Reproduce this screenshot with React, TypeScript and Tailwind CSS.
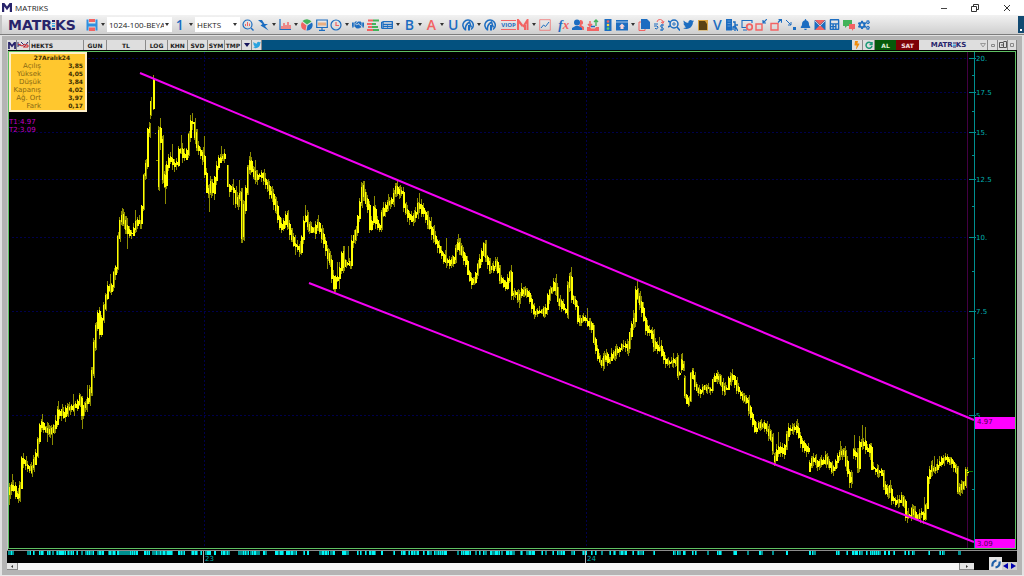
import type { ReactNode } from "react"
import {
  FaBell,
  FaBolt,
  FaCalculator,
  FaCogs,
  FaHandshake,
  FaNewspaper,
  FaTwitter,
} from "react-icons/fa"

type Point = [number, number]
type Span = [number, number]

// Price path as x,y pairs; a new run starts wherever the series has a gap.
const priceRuns: number[][] = [
  [9, 493, 12, 485, 15, 488, 18, 499, 21, 487, 22, 465, 23, 458, 27, 464, 31, 470, 34, 466, 36, 457, 38, 448, 40, 430,
    42, 421, 45, 428, 50, 433, 53, 429, 57, 423, 58, 411, 62, 412, 65, 416, 68, 407, 72, 408, 78, 405, 81, 398, 82, 420,
    84, 408, 87, 403, 90, 398, 92, 384, 94, 357, 96, 333, 99, 312, 101, 333, 103, 317, 106, 302, 108, 290, 110, 285,
    112, 293, 114, 277, 117, 267, 118, 250, 119, 238, 121, 220, 122, 213, 126, 224, 130, 233, 133, 233, 137, 222,
    142, 221, 143, 205, 144, 180, 147, 165, 148, 150, 149, 130],
  [150, 114, 151, 104],
  [153, 79, 154, 105],
  [158, 186, 160, 130, 162, 140, 163, 173, 166, 183, 168, 165, 171, 157, 175, 164, 178, 163, 181, 144, 183, 155,
    187, 157, 189, 145, 191, 127, 193, 119, 195, 126, 197, 143, 200, 150, 204, 157, 206, 173, 209, 200, 211, 180,
    214, 190, 217, 173, 219, 160, 225, 155],
  [227, 167, 228, 183, 232, 190, 234, 187, 237, 203, 241, 193, 243, 235, 244, 233, 245, 207, 248, 180, 250, 157,
    253, 170, 257, 177, 262, 173, 267, 183, 272, 193, 277, 207, 282, 230, 287, 215, 290, 230, 295, 243, 302, 250,
    304, 227, 306, 213, 310, 228, 315, 230, 319, 223, 322, 233, 327, 250, 332, 263, 334, 290, 337, 277, 340, 277,
    343, 253, 345, 265, 348, 260, 351, 265, 353, 240, 357, 232, 360, 210, 362, 193, 363, 188, 367, 200, 369, 207,
    371, 227, 373, 220, 374, 203, 377, 220, 380, 230, 383, 215, 388, 203, 392, 202, 397, 187, 400, 192, 403, 193,
    405, 205, 408, 213, 412, 220, 417, 212, 420, 202, 423, 210, 428, 218, 432, 230, 436, 238, 440, 248, 445, 258,
    452, 263, 456, 257, 458, 240, 462, 250, 467, 262, 470, 277, 474, 283, 477, 273, 481, 260, 485, 245, 488, 262,
    492, 270, 497, 263, 501, 277, 507, 287, 511, 273, 513, 293, 517, 293, 519, 298, 523, 290, 528, 292, 532, 301,
    534, 312, 539, 312, 543, 310, 546, 313, 550, 292, 553, 290, 556, 280, 558, 298, 563, 305, 567, 312, 569, 287,
    571, 277, 573, 297, 577, 305, 579, 320, 585, 318, 590, 324, 593, 327, 595, 340, 598, 355, 603, 363, 607, 355,
    610, 362, 614, 353, 620, 348, 625, 345, 629, 347, 631, 333, 633, 323, 635, 320, 636, 302, 637, 290, 641, 302,
    644, 313, 647, 327, 652, 332, 656, 347, 662, 348, 664, 358, 670, 362, 677, 360, 679, 373],
  [681, 360, 683, 367],
  [684, 380, 685, 387, 687, 403, 690, 400, 692, 373, 693, 373, 696, 385, 700, 392, 705, 388, 712, 388, 714, 380,
    719, 375, 723, 387, 727, 390, 730, 380, 734, 377, 738, 387, 743, 397, 748, 400, 751, 412, 756, 430, 760, 424,
    765, 425, 769, 431, 772, 438, 773, 448],
  [774, 460, 777, 457, 779, 445, 784, 452, 787, 440, 790, 428, 797, 427, 801, 438, 805, 447, 808, 450],
  [809, 470, 812, 461, 815, 458, 820, 465, 827, 458, 834, 470, 840, 453, 845, 452, 848, 468, 851, 479],
  [853, 452, 857, 455, 859, 466, 861, 443, 865, 442, 868, 450, 871, 447, 873, 467, 878, 470, 883, 473, 886, 493,
    891, 488, 893, 498, 897, 502, 904, 497, 907, 515, 910, 516, 913, 510, 917, 517, 922, 512, 925, 516, 928, 503,
    929, 477, 932, 468, 937, 468, 942, 460, 947, 457, 953, 462, 957, 470, 959, 490, 964, 485, 966, 480, 967, 472],
]

// Long wicks: x, high, low.
const longWicks: [number, number, number][] = [
  [9, 487, 505], [12, 474, 490], [18, 488, 503], [23, 453, 466], [42, 414, 430], [47, 422, 442], [52, 428, 445],
  [58, 401, 416], [73, 394, 412], [82, 396, 429], [87, 385, 412], [99, 307, 330], [110, 274, 292], [122, 208, 222],
  [127, 218, 249], [135, 210, 233], [151, 103, 116], [160, 118, 150], [165, 165, 204], [172, 144, 170], [181, 135, 152],
  [192, 113, 130], [195, 118, 144], [204, 136, 162], [209, 190, 212], [214, 178, 200], [221, 146, 160], [233, 179, 205],
  [239, 180, 207], [250, 152, 175], [255, 160, 184], [272, 186, 200], [295, 235, 255], [305, 205, 222], [318, 215, 229],
  [327, 245, 269], [337, 262, 280], [339, 262, 289], [343, 246, 268], [348, 246, 262], [334, 278, 294], [362, 183, 200],
  [374, 196, 218], [388, 194, 206], [397, 181, 196], [403, 187, 208], [419, 193, 208], [431, 217, 238], [446, 238, 260],
  [458, 234, 248], [485, 240, 252], [497, 257, 268], [511, 265, 282], [519, 290, 308], [534, 303, 319], [556, 274, 286],
  [571, 267, 292], [587, 308, 324], [606, 349, 362], [637, 281, 298], [633, 310, 330], [652, 327, 343], [659, 337, 352],
  [673, 353, 362], [682, 353, 368], [693, 368, 380], [717, 370, 384], [732, 369, 382], [778, 432, 450], [797, 419, 430],
  [816, 454, 468], [840, 441, 460], [851, 470, 488], [854, 435, 455], [862, 425, 446], [865, 427, 449], [870, 443, 460],
  [913, 505, 516], [924, 497, 514], [908, 508, 519], [934, 456, 470], [947, 454, 464],
]

const noise = (n: number) => {
  const v = Math.sin(n * 127.1) * 43758.5453
  return v - Math.floor(v)
}

function valueAt(run: number[], x: number) {
  for (let i = 0; i + 3 < run.length; i += 2) {
    if (x <= run[i + 2]) {
      const t = (x - run[i]) / (run[i + 2] - run[i])
      return run[i + 1] + (run[i + 3] - run[i + 1]) * t
    }
  }
  return run[run.length - 1]
}

function buildBars() {
  let bodies = ""
  let wicks = ""
  for (const run of priceRuns) {
    const last = run[run.length - 2]
    for (let x = run[0]; x <= last; x += 2) {
      const a = valueAt(run, x)
      const b = valueAt(run, Math.min(x + 2, last))
      const top = Math.round(Math.min(a, b) - noise(x) * 3)
      const bottom = Math.round(Math.max(a, b) + 1 + noise(x + 7) * 3)
      const up = Math.round(noise(x + 11) * 5)
      const down = Math.round(noise(x + 19) * 5)
      bodies += `M${x + 0.5} ${top}V${bottom}`
      // Solid candles fill both columns, hollow ones leave a dim second column.
      if (noise(x + 3) > 0.45) bodies += `M${x + 1.5} ${top + 1}V${bottom}`
      else wicks += `M${x + 1.5} ${top - down}V${bottom + up}`
      wicks += `M${x + 0.5} ${top - up}V${bottom + down}`
    }
  }
  for (const [x, high, low] of longWicks) wicks += `M${x + 0.5} ${high}V${low}`
  return { bodies, wicks }
}

const bars = buildBars()

const scaleY = (price: number) => Math.round(415 - 257.5 * Math.log(price / 5))
const majorPrices = [20, 17.5, 15, 12.5, 10, 7.5, 5]
const minorPrices = [18.75, 16.25, 13.75, 11.25, 8.75, 6.25, 3.75]
const priceLabel = (p: number) => (p === 5 ? "5" : Number.isInteger(p) ? `${p}.` : `${p}`)

const trendLines: [Point, Point][] = [
  [[140, 73], [974, 420]],
  [[309, 283], [974, 542]],
]

const newsSpans: Span[] = [
  [8, 10], [11, 13], [27, 28], [29, 30], [33, 34], [39, 41], [42, 43], [47, 48], [49, 50], [52, 53], [56, 65], [67, 73],
  [76, 77], [81, 82], [85, 87], [88, 93], [97, 103], [108, 115], [117, 137], [144, 149], [152, 172], [178, 184],
  [191, 197], [200, 201], [205, 210], [214, 215], [221, 229], [238, 248], [250, 259], [263, 266], [275, 283], [286, 296],
  [303, 304], [307, 308], [319, 328], [330, 334], [342, 348], [357, 358], [360, 361], [365, 366], [369, 375], [381, 382],
  [393, 394], [401, 405], [408, 409], [411, 418], [423, 424], [427, 431], [434, 446], [457, 458], [461, 470], [475, 476],
  [479, 480], [483, 486], [490, 499], [501, 502], [506, 514], [520, 522], [526, 534], [541, 542], [545, 546], [552, 553],
  [557, 564], [571, 574], [582, 586], [591, 592], [595, 596], [601, 602], [609, 610], [613, 615], [619, 626], [632, 633],
  [637, 643], [653, 654], [673, 675], [677, 680], [683, 685], [692, 693], [695, 696], [707, 708], [717, 721], [733, 736],
  [747, 748], [759, 762], [772, 773], [786, 787], [809, 810], [812, 815], [836, 839], [846, 847], [852, 857], [859, 862],
  [866, 867], [870, 880], [884, 885], [888, 889], [893, 894], [904, 905], [908, 909], [912, 914], [928, 929], [939, 940],
  [942, 944], [958, 960],
]

const quoteRows = [
  ["Açılış", "3,85"],
  ["Yüksek", "4,05"],
  ["Düşük", "3,84"],
  ["Kapanış", "4,02"],
  ["Ağ. Ort", "3,97"],
  ["Fark", "0,17"],
]

const BLUE = "#1c6dc1"
const RED = "#f26363"

function Glyph({ children }: { children: ReactNode }) {
  return (
    <svg viewBox="0 0 12 12" className="size-3" fill="none" stroke={BLUE} strokeWidth="1.4">
      {children}
    </svg>
  )
}

function Tool({ label, children }: { label: string; children: ReactNode }) {
  return (
    <button type="button" aria-label={label} className="flex min-w-0 grow-2 basis-0 items-center justify-center text-[#1c6dc1]">
      {children}
    </button>
  )
}

function Caret({ label }: { label: string }) {
  return (
    <button type="button" aria-label={label} className="flex min-w-0 grow basis-0 items-center justify-center">
      <svg viewBox="0 0 4 3" className="h-[3px] w-1 shrink-0 fill-[#333]">
        <path d="M0 0h4L2 3z" />
      </svg>
    </button>
  )
}

function Letter({ children, red }: { children: ReactNode; red?: boolean }) {
  return (
    <span className={`text-[14px] leading-3 font-semibold ${red ? "text-[#f26363]" : "text-[#1c6dc1]"}`}>{children}</span>
  )
}

function Brand({ small }: { small?: boolean }) {
  return (
    <span
      className={`flex items-center font-["DejaVu_Sans",sans-serif] font-bold text-[#28246b] ${small ? "text-[7px] leading-[8px]" : "text-[14px] leading-4"}`}
    >
      MATR
      <svg viewBox="0 0 4 12" className={small ? "h-[6px] w-[3px]" : "h-3 w-[3px]"} preserveAspectRatio="none">
        <path d="M0 1h4v2H0z" fill="#28246b" />
        <path d="M0 4h4v1H0zM0 6h4v2H0z" fill="#3fa9e0" />
        <path d="M0 9h4v2H0z" fill="#28246b" />
      </svg>
      KS
    </span>
  )
}

function BrandMark({ small }: { small?: boolean }) {
  return (
    <svg viewBox="0 0 10 9" className={small ? "h-[7px] w-2" : "h-[9px] w-[10px]"} fill="#28246b">
      <path d="M0 0h2.4L5 3.6 7.6 0H10v9H7.8V3.6L5 7.2 2.2 3.6V9H0z" />
    </svg>
  )
}

function Combo({ label, value, width }: { label: string; value: string; width: string }) {
  return (
    <div className={`relative h-[15px] bg-white ${width}`}>
      <select
        aria-label={label}
        className="block h-full w-full appearance-none overflow-hidden bg-transparent pr-2 pl-[2px] text-[8px] text-[#222]"
      >
        <option>{value}</option>
      </select>
      <svg viewBox="0 0 4 3" className="pointer-events-none absolute top-[6px] right-[3px] h-[3px] w-1 fill-[#333]">
        <path d="M0 0h4L2 3z" />
      </svg>
    </div>
  )
}

function TitleBar() {
  return (
    <header className="flex h-[15px] items-center bg-white pl-[2px]">
      <BrandMark />
      <h1 className="ml-[3px] text-[8px] leading-[15px] text-[#222]">MATRIKS</h1>
      <div className="ml-auto flex items-center">
        <button type="button" aria-label="Simge durumuna küçült" className="flex w-8 justify-center">
          <svg viewBox="0 0 8 8" className="size-2" stroke="#444" fill="none"><path d="M1 4.500h6" /></svg>
        </button>
        <button type="button" aria-label="Önceki boyut" className="flex w-[30px] justify-center">
          <svg viewBox="0 0 8 8" className="size-2" stroke="#333" fill="none"><path d="M.5 2.500h5v5h-5zM2.500 2.500v-2h5v5h-2" /></svg>
        </button>
        <button type="button" aria-label="Kapat" className="flex w-[34px] justify-center">
          <svg viewBox="0 0 8 8" className="size-2" stroke="#333" fill="none"><path d="M1 1l6 6M7 1L1 7" /></svg>
        </button>
      </div>
    </header>
  )
}

function Compass() {
  return (
    <Glyph>
      <path d="M3.500 10.700A5.200 5.200 0 1 1 9 10.500" strokeWidth="1.500" />
      <path d="M3.500 11.500C3 8 4 5 7.500 3c1 2 .5 3 2 5.500" strokeWidth="1.500" />
      <path d="M7 6v5.500" strokeWidth="2" />
    </Glyph>
  )
}

function Toolbar() {
  return (
    <div className="flex h-[19px] items-stretch bg-linear-to-b from-[#f2f2f2] to-[#cfcfcf]">
      <div className="flex w-[84px] items-center border-l-2 border-[#c4c4c4] pl-[6px]">
        <Brand />
      </div>
      <div className="flex w-[23px] items-stretch">
        <Tool label="Kaydet">
          <Glyph>
            <path d="M.5.5h2v4h7v-4h2v11h-2v-4h-7v4h-2z" fill="#2f8fe0" stroke="none" />
            <path d="M3 0h6v3H3zM3 8.500h6V12H3z" fill={RED} stroke="none" />
          </Glyph>
        </Tool>
        <Caret label="Kaydet seçenekleri" />
      </div>
      <div className="flex items-center">
        <Combo label="Sayfa" value="1024-100-BEYA" width="w-[65px]" />
      </div>
      <div className="flex w-[23px] items-stretch">
        <Tool label="Periyot">
          <Letter>1</Letter>
        </Tool>
        <Caret label="Periyot seçenekleri" />
      </div>
      <div className="flex items-center">
        <Combo label="Sembol" value="HEKTS" width="w-[45px]" />
      </div>
      <div className="flex min-w-0 flex-1 items-stretch pr-[147px] pl-px">
        <Tool label="Yakınlaştır">
          <Glyph>
            <circle cx="5.500" cy="5.500" r="4.500" strokeWidth="1.200" />
            <path d="M9 9l2.500 2.500" />
            <path d="M3.500 7V5M5.500 7V3M7.500 7V4.500" stroke={RED} strokeWidth="1" />
          </Glyph>
        </Tool>
        <Tool label="Çizim">
          <Glyph><path d="M1 1h4l2.500 4H11L8 7l3.500 4.500L3.500 6.500 5.500 5z" fill={BLUE} stroke="none" /></Glyph>
        </Tool>
        <Caret label="Çizim seçenekleri" />
        <Tool label="Grafik">
          <Glyph>
            <path d="M1 0v10.500h11" strokeWidth="1.200" />
            <path d="M3 10V7M5 10V4M7 10V6M9 10V3M11 10V6" stroke={RED} />
          </Glyph>
        </Tool>
        <Caret label="Grafik seçenekleri" />
        <Tool label="Dağılım">
          <Glyph>
            <path d="M5.500 6.500L1 3a5.500 5.500 0 0 0 3.500 8.500z" fill={RED} stroke="none" />
            <path d="M6 5.500L1.500 2a6 6 0 0 1 9 .5z" fill="#43b35a" stroke="none" />
            <path d="M6.500 6.500L11 3.500a5.500 5.500 0 0 1-5.500 8z" fill={BLUE} stroke="none" />
          </Glyph>
        </Tool>
        <Tool label="Ekran">
          <Glyph>
            <path d="M.7 1h10.600v7.500H.7zM6 8.500v2.500M3 11.300h6" strokeWidth="1.200" />
            <path d="M3 6.500v-3M5 6.500v-3M7 6.500v-3M9 6.500v-3" stroke="#ec9a5a" />
          </Glyph>
        </Tool>
        <Tool label="Zaman">
          <Glyph><circle cx="6" cy="6" r="5" strokeWidth="1.200" /><path d="M6 3v3.500h3" stroke={RED} strokeWidth="1.200" /></Glyph>
        </Tool>
        <Caret label="Zaman seçenekleri" />
        <Tool label="Takas"><FaHandshake className="size-3" /></Tool>
        <Tool label="Derinlik">
          <Glyph>
            <path d="M1 1.500h5M0 5h5M1 8h4M0 11h6" stroke={RED} strokeWidth="2" />
            <path d="M6 1.500h6M5 5h4M5 8h6M6 11h6" stroke="#43b35a" strokeWidth="2" />
          </Glyph>
        </Tool>
        <Tool label="Haberler"><FaNewspaper className="size-3" /></Tool>
        <Caret label="Haber seçenekleri" />
        <Tool label="Bilanço"><Letter>B</Letter></Tool>
        <Caret label="Bilanço seçenekleri" />
        <Tool label="Analiz"><Letter red>A</Letter></Tool>
        <Caret label="Analiz seçenekleri" />
        <Tool label="Uzman"><Letter>U</Letter></Tool>
        <Tool label="Gösterge"><Compass /></Tool>
        <Caret label="Gösterge seçenekleri" />
        <Tool label="Tarayıcı"><Compass /></Tool>
        <span className="w-1" />
        <Tool label="VIOP">
          <span className="border-y border-[#f26363] text-[6px] leading-[8px] font-bold">VIOP</span>
        </Tool>
        <Tool label="Matriks">
          <Glyph>
            <path d="M1 11V1l4.500 6" stroke={RED} strokeWidth="2.200" />
            <path d="M6 8l4.500-7v10M8 6v5" stroke={RED} strokeWidth="2" />
          </Glyph>
        </Tool>
        <Caret label="Matriks seçenekleri" />
        <Tool label="Trend">
          <Glyph>
            <path d="M.7.7h10.600v10.600H.7z" stroke={RED} strokeWidth=".7" />
            <path d="M2 9l2.500-3 2 1.500L10 3" strokeWidth="1" />
          </Glyph>
        </Tool>
        <span className="w-1" />
        <Tool label="Fonksiyon">
          <span className="font-['Liberation_Serif',serif] text-[13px] leading-3 font-bold italic">
            f<span className="text-[#f26363]">x</span>
          </span>
        </Tool>
        <Tool label="Kullanıcılar">
          <Glyph>
            <path d="M8 1a2.500 2.500 0 0 1 1 5l3 2v3H7z" fill={RED} stroke="none" />
            <circle cx="5" cy="3.500" r="3" fill={BLUE} stroke="none" />
            <path d="M0 11V9l3.500-2h3L10 9v2z" fill={BLUE} stroke="none" />
          </Glyph>
        </Tool>
        <Tool label="Aktar">
          <Glyph>
            <path d="M3 2v5M1 5l2 2.500L5 5" stroke={RED} />
            <path d="M9 7V1M7 3l2-2 2 2" stroke="#43b35a" />
            <path d="M0 8h3l1 1.500h4L9 8h3v4H0z" fill={RED} stroke="none" />
            <path d="M4 7.500h4" stroke={BLUE} strokeWidth="1.500" />
          </Glyph>
        </Tool>
        <Tool label="Sinyal">
          <Glyph>
            <path d="M2.500 0h7v12h-7z" fill={BLUE} stroke="none" />
            <circle cx="6" cy="2.500" r="1.300" fill={RED} stroke="none" />
            <circle cx="6" cy="6" r="1.300" fill="#ffd83a" stroke="none" />
            <circle cx="6" cy="9.500" r="1.300" fill="#58d46b" stroke="none" />
          </Glyph>
        </Tool>
        <Tool label="Yükle">
          <Glyph>
            <path d="M0 1h12v10.500H0z" fill={BLUE} stroke="none" />
            <path d="M0 3h12" stroke="#cfe0f2" strokeWidth=".8" />
            <path d="M6 4.500l3 3H7.500V10h-3V7.500H3z" fill="#fbd5d5" stroke="none" />
          </Glyph>
        </Tool>
        <Caret label="Yükleme seçenekleri" />
        <Tool label="Kopyala">
          <Glyph>
            <path d="M1 3h6v8.500H1z" stroke={RED} strokeWidth="1" />
            <path d="M3 0h6l3 3v7H3z" fill={BLUE} stroke="none" />
          </Glyph>
        </Tool>
        <Tool label="Döviz">
          <Glyph>
            <path d="M4 3a3 3 0 0 1 6 1M8 3l2 1.500L11 2" stroke={RED} strokeWidth="1" />
            <path d="M1 5h4M1 7h3a1.500 1.500 0 1 1-2 2M11 6H9c-2 0-2 2 0 2.500s2 2.500 0 2.500H7M9 5v7" strokeWidth="1" />
          </Glyph>
        </Tool>
        <Tool label="Ara">
          <Glyph>
            <circle cx="6" cy="5" r="4" strokeWidth="1.500" />
            <path d="M9 8l3 3.500M2 3l-2-1M2 7l-2 1" strokeWidth="1.600" />
            <circle cx="6" cy="5" r="1.200" strokeWidth="1" />
          </Glyph>
        </Tool>
        <Tool label="Twitter"><FaTwitter className="size-[11px]" /></Tool>
        <Tool label="Notlar">
          <Glyph>
            <path d="M1 1h10v10.500H1z" fill="#d9a441" stroke="none" />
            <path d="M2 2h6l2 3v6H2z" fill="#5a4214" stroke="none" />
          </Glyph>
        </Tool>
        <Tool label="Veri"><Letter>V</Letter></Tool>
        <Tool label="Şirket">
          <Glyph>
            <path d="M0 0h6v11.500H0z" fill={BLUE} stroke="none" />
            <path d="M7 3h2v3h3M7 11V8l2-1 3 5M9 8v4" />
            <path d="M1.500 2h3M1.500 4.500h3M1.500 7h3" stroke="#6ea4dc" strokeWidth=".8" />
          </Glyph>
        </Tool>
        <Tool label="Ekranı kapat">
          <Glyph>
            <path d="M6 8.500H1v-7h10V4M2 11h4" strokeWidth="1.100" />
            <circle cx="8.500" cy="8" r="2.800" stroke={RED} strokeWidth="1.800" />
          </Glyph>
        </Tool>
        <Tool label="Küçült">
          <Glyph>
            <path d="M1 5h6v6H1z" stroke={RED} />
            <path d="M12 0L8.500 3.500M8 1v3h3" strokeWidth="1.200" />
          </Glyph>
        </Tool>
        <Tool label="Büyüt">
          <Glyph>
            <path d="M1 4.500h7V11H1z" stroke={RED} />
            <path d="M8 3.500L11.500 0M8.500.7h3v3" strokeWidth="1.200" />
          </Glyph>
        </Tool>
        <Tool label="Taşı">
          <Glyph>
            <path d="M1 1l5 5M6 3v3H3" strokeWidth="1" />
            <path d="M8 8h3v3H8z" fill={BLUE} stroke="none" />
          </Glyph>
        </Tool>
        <Tool label="Alarm"><FaBell className="size-[11px]" /></Tool>
        <Tool label="Mesaj">
          <Glyph>
            <path d="M.5 1h11v10H.5z" fill={BLUE} stroke="none" />
            <path d="M1 1h10L6 6z" fill={RED} stroke="none" />
            <path d="M1 11l4-4h2l4 4z" fill={RED} stroke="none" />
            <path d="M.5 1.500L6 7l5.500-5.500" stroke="#f3dede" strokeWidth=".8" />
          </Glyph>
        </Tool>
        <Tool label="Hesap makinesi"><FaCalculator className="size-[11px]" /></Tool>
        <Tool label="Sohbet">
          <Glyph>
            <path d="M0 1h9v6H4L2 9V7H0z" fill="#43b35a" stroke="none" />
            <path d="M6 5h6v5h-1.500L9 12V10H6z" fill={RED} stroke="none" />
          </Glyph>
        </Tool>
        <Tool label="Ayarlar"><FaCogs className="size-3" /></Tool>
      </div>
      <div className="my-px flex w-[6px] items-end justify-center bg-[#124a72] pb-[2px] text-white">
        <span className="size-[2px] bg-white" />
      </div>
    </div>
  )
}

function Cell({ children, width, label }: { children: ReactNode; width: string; label?: string }) {
  return (
    <button
      type="button"
      aria-label={label}
      className={`flex h-full shrink-0 items-center justify-center border-r border-[#8a8a8a] bg-[#dedede] text-[#222] ${width}`}
    >
      {children}
    </button>
  )
}

function ChartHeader() {
  return (
    <div className="flex h-[10px] items-stretch bg-[#03517f] font-['DejaVu_Sans',sans-serif] text-[6px] leading-[9px] font-bold">
      <Cell width="w-[10px]" label="Matriks"><BrandMark small /></Cell>
      <Cell width="w-[13px]" label="Para birimi">
        <svg viewBox="0 0 12 8" className="h-2 w-3" fill="none">
          <path d="M1 1v5M1 4h3M7 6l4-5M4 1l3 3" stroke="#28246b" strokeWidth="1" />
          <path d="M1 3l4 2 3-2M6 6h5V4H8" stroke="#d22" />
        </svg>
      </Cell>
      <button type="button" className="w-[54px] border-r border-[#8a8a8a] bg-[#dedede] pl-px text-left text-[#222]">HEKTS</button>
      <Cell width="w-[23px]">GUN</Cell>
      <Cell width="w-[39px]">TL</Cell>
      <Cell width="w-[22px]">LOG</Cell>
      <Cell width="w-5">KHN</Cell>
      <Cell width="w-5">SVD</Cell>
      <Cell width="w-[17px]">SYM</Cell>
      <Cell width="w-[17px]">TMP</Cell>
      <Cell width="w-[10px]" label="Menü">
        <svg viewBox="0 0 6 4" className="h-1 w-[6px]" fill="#15155c"><path d="M0 0h6L3 4z" /></svg>
      </Cell>
      <Cell width="w-[10px]" label="Paylaş"><FaTwitter className="size-2 text-[#2aa3e0]" /></Cell>
      <div className="ml-auto flex items-stretch">
        <Cell width="w-[11px]" label="Hızlı emir">
          <FaBolt className="size-2 text-[#f08c0a]" />
        </Cell>
        <Cell width="w-3" label="Yenile">
          <svg viewBox="0 0 8 8" className="size-2" fill="none" stroke="#1c9a78" strokeWidth="1.500">
            <path d="M6.500 2.500A3 3 0 1 0 7 5M7 1v2.500H4.500" />
          </svg>
        </Cell>
        <button type="button" className="w-[21px] bg-[#065a0b] text-[6px] text-[#e2f3dc]">AL</button>
        <button type="button" className="w-[23px] bg-[#7d0206] text-[6px] text-[#fbe3e3]">SAT</button>
        <div className="flex w-[59px] items-center justify-center bg-[#dedede]"><Brand small /></div>
        <Cell width="w-[10px]" label="Aşağı">
          <svg viewBox="0 0 6 6" className="size-[6px]" fill="none" stroke="#999"><path d="M.5 1.500h5L3 5z" /></svg>
        </Cell>
        <Cell width="w-[10px]" label="Simge">
          <svg viewBox="0 0 6 6" className="size-[6px]" fill="none" stroke="#888"><path d="M1.500 2.500h3v2h-3z" /></svg>
        </Cell>
        <Cell width="w-[10px]" label="Pencere">
          <svg viewBox="0 0 8 8" className="size-2" fill="none" stroke="#555"><path d="M.5 1.500h4v5h-4zM4.500.5h3v6h-3M2 4h3" /></svg>
        </Cell>
        <Cell width="w-[9px]" label="Kapat">
          <svg viewBox="0 0 6 6" className="size-[6px]" fill="none" stroke="#888"><path d="M1.500 1.500h3v3h-3z" /></svg>
        </Cell>
      </div>
    </div>
  )
}

function PriceChart() {
  return (
    <svg viewBox="7 50 1010 500" className="block h-auto w-full bg-black font-['DejaVu_Sans',sans-serif]" fill="none">
      <g stroke="#00004c" strokeDasharray="2 2" shapeRendering="crispEdges">
        {majorPrices.map((p) => (
          <path key={p} d={`M12 ${scaleY(p) + 0.5}H968`} />
        ))}
        <path d="M204.500 52V548M586.500 52V548" />
      </g>
      <path d="M967.500 52V548" stroke="#420042" strokeWidth="1" />

      <g shapeRendering="crispEdges">
        <path d={bars.wicks} stroke="#8c8c00" />
        <path d={bars.bodies} stroke="#ffff00" />
        <path d="M155 133.500h1M156 160.500h2" stroke="#8c8c00" />
        <path d="M967 471.500h6" stroke="#0a7a0a" />
      </g>

      <g stroke="#f400f4" strokeWidth="2">
        {trendLines.map(([a, b]) => (
          <path key={a[0]} d={`M${a[0]} ${a[1]}L${b[0]} ${b[1]}`} />
        ))}
      </g>

      <g stroke="#008f8f" shapeRendering="crispEdges">
        <path d="M974.500 52V548" />
        {majorPrices.map((p) => (
          <path key={p} d={`M969 ${scaleY(p) + 0.5}H976`} />
        ))}
        {minorPrices.map((p) => (
          <path key={p} d={`M972 ${scaleY(p) + 0.5}H975`} />
        ))}
      </g>
      <g fill="#00b0b0" fontSize="7">
        {majorPrices.map((p) => (
          <text key={p} x="976" y={scaleY(p) + 3}>
            {priceLabel(p)}
          </text>
        ))}
      </g>

      <path d="M975 417h40v12h-40zM975 539h40v9h-40z" fill="#ff00ff" />
      <g fill="#4a004a" fontSize="7">
        <text x="977" y="424">4.97</text>
        <text x="977" y="546">3.09</text>
      </g>

      <g fill="#c400c4" fontSize="7">
        <text x="9" y="124">T1:4.97</text>
        <text x="9" y="132">T2:3.09</text>
      </g>
      <path d="M8.500 51.500V548.500H1015.500V51.500H8" stroke="#5fbf63" shapeRendering="crispEdges" />
      <path d="M7.500 50V550" stroke="#c8c8c8" />
    </svg>
  )
}

function TimeAxis() {
  return (
    <svg viewBox="7 550 1010 13" className="block h-auto w-full bg-black font-['DejaVu_Sans',sans-serif]" shapeRendering="crispEdges">
      <path d="M7 550h1010v1H7z" fill="#8c8c8c" />
      {newsSpans.map(([from, to]) =>
        Array.from({ length: to - from + 1 }, (_, i) => (
          <rect
            key={from + i}
            x={from + i}
            y="551"
            width="1"
            height="4"
            fill={noise(from + i) > 0.5 ? "#00f4f4" : "#009090"}
          />
        )),
      )}
      <path d="M203 551h1v12h-1zM585 551h1v12h-1z" fill="#b0b0b0" />
      <g fill="#00b0b0" fontSize="7">
        <text x="205" y="561">23</text>
        <text x="587" y="561">24</text>
      </g>
    </svg>
  )
}

function QuoteBox() {
  return (
    <table
      aria-label="Günlük fiyatlar"
      className="absolute top-[2px] left-[2px] w-[78px] border-2 border-[#fff0c8] bg-[#ffc72e] font-['DejaVu_Sans',sans-serif] text-[7px] leading-[8px] text-[#8a6a14]"
    >
      <thead>
        <tr>
          <th colSpan={2} className="h-[9px] p-0 pl-2 text-[6px] text-[#3a2a00]">27Aralık24</th>
        </tr>
      </thead>
      <tbody>
        {quoteRows.map(([name, value]) => (
          <tr key={name}>
            <th scope="row" className="w-[31px] p-0 text-right font-normal">{name}</th>
            <td className="p-0 pr-[2px] text-right text-[6px] font-bold text-[#3a2a00]">{value}</td>
          </tr>
        ))}
      </tbody>
    </table>
  )
}

function ScrollRow() {
  return (
    <div className="flex h-[7px] items-stretch bg-black">
      <div className="flex min-w-0 flex-1 items-stretch bg-[#f6f6f6]">
        <button type="button" aria-label="Sola kaydır" className="flex w-[11px] items-center justify-center border-r border-b border-[#888] bg-[#e4e4e4]">
          <svg viewBox="0 0 2 3" className="h-[3px] w-[2px]"><path d="M2 0v3L0 1.500z" fill="#333" /></svg>
        </button>
        <button type="button" aria-label="Sağa kaydır" className="ml-auto flex w-[15px] items-center justify-center border-b border-l border-[#888] bg-[#e4e4e4]">
          <svg viewBox="0 0 2 3" className="h-[3px] w-[2px]"><path d="M0 0v3l2-1.500z" fill="#333" /></svg>
        </button>
      </div>
      <div className="flex w-[43px] items-end justify-end">
        <button type="button" aria-label="Yenile" className="flex size-[13px] shrink-0 items-center justify-center bg-[#e4e4e4]">
          <svg viewBox="0 0 10 10" className="size-[10px]" fill="none" stroke="#1c5fa8" strokeWidth="2.200">
            <path d="M1.500 7.500C1 4 3 2 5.500 1.500M8.500 2.500C9 6 7 8 4.500 8.500" />
          </svg>
        </button>
        <button type="button" aria-label="Önceki" className="flex h-2 w-[7px] items-center justify-center bg-[#d0d0d0]">
          <svg viewBox="0 0 5 6" className="h-[6px] w-[5px]" fill="#0000b0"><path d="M5 0v6L0 3z" /></svg>
        </button>
        <button type="button" aria-label="Sonraki" className="flex h-2 w-2 items-center justify-center bg-[#d0d0d0]">
          <svg viewBox="0 0 5 6" className="h-[6px] w-[5px]" fill="#0000b0"><path d="M0 0v6l5-3z" /></svg>
        </button>
      </div>
    </div>
  )
}

export default function App() {
  return (
    <div className="w-full bg-[#e9e9e9] pb-px font-['Open_Sans',sans-serif]">
      <TitleBar />
      <Toolbar />
      <main className="border-t border-[#7d7d7d] bg-[#b4b4b4]">
        <div className="border-x-2 border-t border-[#e2e2e2]">
          <div className="border-t-4 border-r-[5px] border-b-[5px] border-l-[5px] border-[#b4b4b4]">
            <ChartHeader />
            <div className="relative">
              <PriceChart />
              <QuoteBox />
            </div>
            <TimeAxis />
            <ScrollRow />
          </div>
        </div>
      </main>
    </div>
  )
}
